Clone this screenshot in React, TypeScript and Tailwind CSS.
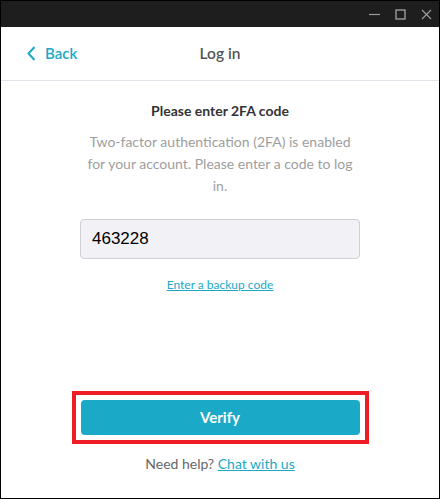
import React from "react";

export default function App() {
  const font = { fontFamily: 'Lato, "Noto Sans", sans-serif' };
  return (
    <div className="w-[440px] h-[499px] border border-black bg-white flex flex-col overflow-hidden" style={font}>
      {/* title bar */}
      <div className="h-[26px] bg-[#1e1e1e] flex items-center justify-end shrink-0">
        <div className="flex items-center gap-[15px] pr-[7px] text-[#9a9a9a]">
          <svg width="11" height="11" viewBox="0 0 11 11"><path d="M0 5.5H11" stroke="currentColor" strokeWidth="1.2" /></svg>
          <svg width="11" height="11" viewBox="0 0 11 11"><rect x="1" y="1" width="9" height="9" fill="none" stroke="currentColor" strokeWidth="1.4" /></svg>
          <svg width="11" height="11" viewBox="0 0 11 11"><path d="M1 1L10 10M10 1L1 10" stroke="currentColor" strokeWidth="1.2" /></svg>
        </div>
      </div>
      {/* header */}
      <div className="h-[54px] border-b border-[#e2e2ea] flex items-center relative shrink-0">
        <div className="flex items-center pl-[26px] gap-[9px] text-[#1ba9c6]">
          <svg width="9" height="15" viewBox="0 0 9 15"><path d="M7.5 1L1.5 7.5L7.5 14" fill="none" stroke="currentColor" strokeWidth="2" /></svg>
          <span className="text-[15px] font-semibold leading-none">Back</span>
        </div>
        <div className="absolute left-0 right-0 text-center text-[15.5px] font-semibold text-[#555] pointer-events-none">Log in</div>
      </div>
      {/* content */}
      <div className="flex-1 flex flex-col items-center">
        <div className="w-[280px] flex flex-col items-center">
          <div className="mt-[20px] text-[14px] font-bold text-[#333] leading-[20px]">Please enter 2FA code</div>
          <p className="mt-[10px] text-[14px] text-[#9e9e9e] leading-[22px] text-center">
            Two-factor authentication (2FA) is enabled for your account. Please enter a code to log in.
          </p>
          <div className="mt-[22px] w-[280px] h-[40px] rounded-[4px] border border-[#cfcfd4] bg-[#f2f2f6] flex items-center pl-[11px]">
            <span className="text-[17px] text-black" style={{ fontFamily: '"Liberation Sans", Arial, sans-serif' }}>463228</span>
          </div>
          <a className="mt-[18px] text-[12px] text-[#1ba9c6] underline leading-[16px]">Enter a backup code</a>
        </div>
        <div className="flex-1" />
        <div className="border-[4px] border-[#ee1c25] p-[5px] w-[297px]">
          <div className="h-[35px] rounded-[4px] bg-[#1aaac7] flex items-center justify-center text-white text-[15px] font-bold">Verify</div>
        </div>
        <div className="mt-[11px] mb-[25px] text-[14px] text-[#666] leading-[18px]">
          Need help? <span className="text-[#1ba9c6] underline">Chat with us</span>
        </div>
      </div>
    </div>
  );
}
